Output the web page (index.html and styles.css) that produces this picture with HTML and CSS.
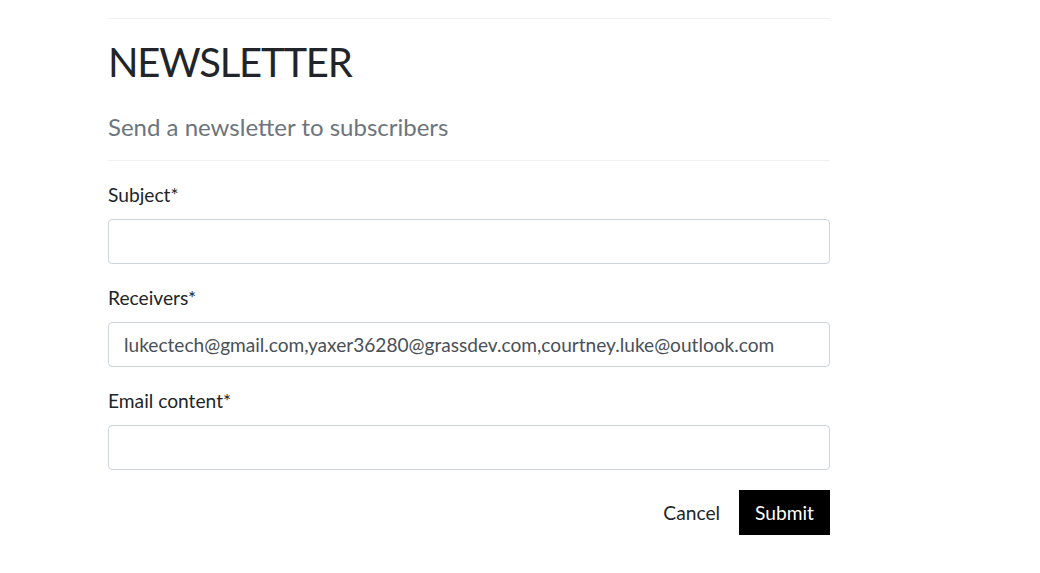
FILE: index.html
```html
<!DOCTYPE html>
<html>
<head>
<meta charset="utf-8">
<link rel="stylesheet" href="styles.css">
</head>
<body>
<div class="wrap">
  <div class="rule"></div>
  <h1 class="title">NEWSLETTER</h1>
  <p class="subtitle">Send a newsletter to subscribers</p>
  <div class="rule"></div>
  <form class="form">
    <div class="field">
      <label class="label">Subject*</label>
      <input class="input" type="text" value="">
    </div>
    <div class="field">
      <label class="label">Receivers*</label>
      <input class="input" type="text" value="lukectech@gmail.com,yaxer36280@grassdev.com,courtney.luke@outlook.com">
    </div>
    <div class="field">
      <label class="label">Email content*</label>
      <input class="input" type="text" value="">
    </div>
    <div class="actions">
      <button type="button" class="btn-cancel">Cancel</button>
      <button type="button" class="btn-submit">Submit</button>
    </div>
  </form>
</div>
</body>
</html>
```

FILE: styles.css
```css
html, body {
  margin: 0;
  padding: 0;
  background: #ffffff;
}
body {
  font-family: Lato, "Liberation Sans", sans-serif;
  color: #212529;
}
.wrap {
  width: 722px;
  margin-left: 108px;
  padding-top: 18px;
}
.rule {
  height: 1px;
  background: #f0f0f0;
}
.title {
  margin: 19px 0 0 0;
  font-size: 40px;
  font-weight: 400;
  line-height: 48px;
  letter-spacing: -1.2px;
  color: #212529;
}
.subtitle {
  margin: 26px 0 18px 0;
  font-size: 24px;
  line-height: 30px;
  color: #6c757d;
}
.form {
  padding-top: 22px;
}
.field {
  display: flex;
  flex-direction: column;
  margin-bottom: 22px;
}
.label {
  font-size: 19.2px;
  line-height: 24px;
  margin-bottom: 12px;
}
.input {
  box-sizing: border-box;
  height: 45px;
  width: 100%;
  border: 1px solid #ced4da;
  border-radius: 4px;
  padding: 0 15px;
  font-family: Lato, "Liberation Sans", sans-serif;
  font-size: 19.1px;
  color: #495057;
  background: #fff;
  outline: none;
}
.actions {
  display: flex;
  justify-content: flex-end;
  align-items: center;
  gap: 19px;
  margin-top: -2px;
}
.btn-cancel {
  background: none;
  border: none;
  padding: 0;
  font-family: Lato, "Liberation Sans", sans-serif;
  font-size: 19.2px;
  color: #212529;
}
.btn-submit {
  height: 45px;
  padding: 0 16px;
  background: #000;
  color: #fff;
  border: none;
  border-radius: 0;
  font-family: Lato, "Liberation Sans", sans-serif;
  font-size: 19.2px;
}
```
